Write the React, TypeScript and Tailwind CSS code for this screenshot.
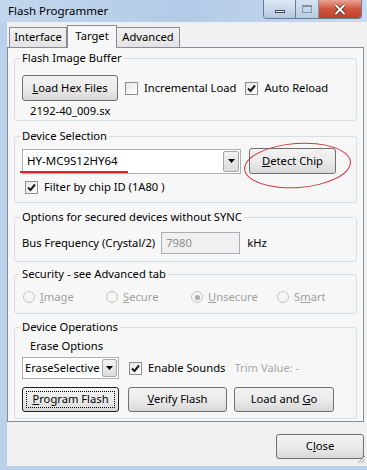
import React from "react";

const font = "font-['Segoe_UI','Noto_Sans',sans-serif]";

const Btn: React.FC<{ children: React.ReactNode; className?: string; focused?: boolean }> = ({
  children,
  className = "",
  focused = false,
}) => (
  <div
    className={`relative flex items-center justify-center rounded-[3px] border ${
      focused ? "border-[#1f1f1f]" : "border-[#707070]"
    } bg-gradient-to-b from-[#f2f2f2] via-[#ebebeb] to-[#d8d8d8] text-black ${className}`}
  >
    {children}
    {focused && <div className="absolute inset-[3px] border border-dotted border-black" />}
  </div>
);

const Check: React.FC<{ checked?: boolean }> = ({ checked }) => (
  <div className="flex h-[13px] w-[13px] shrink-0 items-center justify-center border border-[#8e8f8f] bg-gradient-to-br from-[#e6e6e6] to-white">
    {checked && (
      <svg width="9" height="9" viewBox="0 0 9 9">
        <path d="M1 4.5 L3.5 7 L8 1.5" fill="none" stroke="#1c1c1c" strokeWidth="2" />
      </svg>
    )}
  </div>
);

const Radio: React.FC<{ checked?: boolean }> = ({ checked }) => (
  <div className="flex h-[12px] w-[12px] items-center justify-center rounded-full border border-[#c3c3c3] bg-[#f4f4f4]">
    {checked && <div className="h-[5px] w-[5px] rounded-full bg-[#a8a8a8]" />}
  </div>
);

const Group: React.FC<{ title: string; children: React.ReactNode; className?: string }> = ({
  title,
  children,
  className = "",
}) => (
  <div className={`relative mx-[6px] rounded-[3px] border border-[#d5dfe5] ${className}`}>
    <span className="absolute -top-[9px] left-[5px] bg-[#f7f7f7] px-[2px] leading-[16px] text-black">
      {title}
    </span>
    {children}
  </div>
);

const Arrow = () => (
  <svg width="7" height="4" viewBox="0 0 7 4">
    <path d="M0 0 H7 L3.5 4 Z" fill="#000" />
  </svg>
);

export default function App() {
  return (
    <div className={`${font} h-[470px] w-[367px] overflow-hidden bg-[#b9d1ea] text-[11.2px]`}>
      {/* title bar */}
      <div className="flex h-[22px] items-start justify-between bg-gradient-to-r from-[#c3d7ee] via-[#b3cbe6] to-[#c9dbef]">
        <span className="pl-[8px] pt-[3px] text-[11.5px] leading-[16px] text-black">Flash Programmer</span>
        <div className="mr-[5px] flex h-[19px] overflow-hidden rounded-b-[4px] border border-t-0 border-[#6b7d95]">
          <div className="flex w-[32px] items-center justify-center border-r border-[#6b7d95] bg-gradient-to-b from-[#dfe9f5] to-[#b5c8e0]">
            <div className="mt-[5px] h-[3px] w-[10px] border border-[#3b4a5e] bg-white" />
          </div>
          <div className="flex w-[23px] items-center justify-center border-r border-[#6b7d95] bg-gradient-to-b from-[#dfe9f5] to-[#b5c8e0] opacity-70">
            <div className="h-[8px] w-[10px] border border-t-2 border-[#6a7a90]" />
          </div>
          <div className="flex w-[42px] items-center justify-center bg-gradient-to-b from-[#e8a493] via-[#d0553f] to-[#c2402b]">
            <svg width="12" height="11" viewBox="0 0 12 11">
              <path d="M1.5 1 L10.5 10 M10.5 1 L1.5 10" stroke="#3a1a14" strokeWidth="3.4" />
              <path d="M1.5 1 L10.5 10 M10.5 1 L1.5 10" stroke="#fff" strokeWidth="2" />
            </svg>
          </div>
        </div>
      </div>

      {/* client */}
      <div className="ml-[7px] flex h-[444px] flex-col bg-[#f0f0f0] text-black">
        {/* tabs */}
        <div className="flex h-[25px] items-end pl-[2px] pt-[2px]">
          <div className="flex h-[20px] w-[58px] items-center justify-center border border-b-0 border-[#898c95] bg-gradient-to-b from-[#f2f2f2] to-[#e3e3e3]">
            Interface
          </div>
          <div className="relative z-10 -mb-[1px] flex h-[23px] w-[50px] items-center justify-center border border-b-0 border-[#898c95] bg-[#f7f7f7] pb-[2px]">
            Target
          </div>
          <div className="flex h-[20px] w-[63px] items-center justify-center border border-b-0 border-l-0 border-[#898c95] bg-gradient-to-b from-[#f2f2f2] to-[#e3e3e3]">
            Advanced
          </div>
        </div>

        {/* tab panel */}
        <div className="mr-[3px] flex h-[375px] flex-col border border-[#898c95] bg-[#f7f7f7] pt-[10px]">
          <Group title="Flash Image Buffer" className="h-[63px]">
            <div className="flex items-center pl-[7px] pt-[16px]">
              <Btn className="h-[26px] w-[96px]">
                <span>
                  <u>L</u>oad Hex Files
                </span>
              </Btn>
              <div className="ml-[7px]">
                <Check />
              </div>
              <span className="ml-[6px]">Incremental Load</span>
              <div className="ml-[9px]">
                <Check checked />
              </div>
              <span className="ml-[6px]">Auto Reload</span>
            </div>
            <div className="pl-[15px] pt-[2px] leading-[15px]">2192-40_009.sx</div>
          </Group>

          <Group title="Device Selection" className="mt-[15px] h-[67px]">
            <div className="flex items-center pl-[7px] pt-[11px]">
              <div className="relative flex h-[25px] w-[219px] items-center border border-[#abadb3] bg-white">
                <span className="pl-[4px] text-[11.5px]">HY-MC9S12HY64</span>
                <div className="absolute left-[-3px] top-[21px] h-[2px] w-[108px] bg-[#e0202a]" />
                <div className="absolute right-[1px] top-[1px] flex h-[21px] w-[16px] items-center justify-center rounded-[2px] border border-[#a7a7a7] bg-gradient-to-b from-[#f2f2f2] to-[#dcdcdc]">
                  <Arrow />
                </div>
              </div>
              <div className="relative ml-[8px]">
                <Btn className="h-[26px] w-[87px]">
                  <span>
                    <u>D</u>etect Chip
                  </span>
                </Btn>
                <div className="absolute -left-[5px] -top-[5px] h-[45px] w-[107px] -rotate-[4deg] rounded-[50%] border-[1.5px] border-[#d8323c]" />
              </div>
            </div>
            <div className="flex items-center gap-[6px] pl-[10px] pt-[5px] leading-[16px]">
              <Check checked />
              <span>Filter by chip ID (1A80 )</span>
            </div>
          </Group>

          <Group title="Options for secured devices without SYNC" className="mt-[14px] h-[45px]">
            <div className="flex items-center pl-[7px] pt-[14px]">
              <span>Bus Frequency (Crystal/2)</span>
              <div className="ml-[6px] flex h-[22px] w-[79px] items-center border border-[#abadb3] bg-[#f0f0f0] pl-[4px] text-[#8d8d8d]">
                7980
              </div>
              <span className="ml-[7px]">kHz</span>
            </div>
          </Group>

          <Group title="Security - see Advanced tab" className="mt-[12px] h-[40px]">
            <div className="flex items-center pl-[8px] pt-[14px] text-[#a0a0a0]">
              <div className="flex w-[83px] items-center gap-[5px]">
                <Radio />
                <span>
                  <u>I</u>mage
                </span>
              </div>
              <div className="flex w-[85px] items-center gap-[5px]">
                <Radio />
                <span>
                  <u>S</u>ecure
                </span>
              </div>
              <div className="flex w-[86px] items-center gap-[5px]">
                <Radio checked />
                <span>
                  <u>U</u>nsecure
                </span>
              </div>
              <div className="flex items-center gap-[5px]">
                <Radio />
                <span>
                  S<u>m</u>art
                </span>
              </div>
            </div>
          </Group>

          <Group title="Device Operations" className="mt-[13px] h-[92px]">
            <div className="pl-[15px] pt-[10px] leading-[16px]">Erase Options</div>
            <div className="flex items-center pl-[7px] pt-[3px]">
              <div className="relative flex h-[22px] w-[97px] items-center border border-[#abadb3] bg-white">
                <span className="pl-[2px]">EraseSelective</span>
                <div className="absolute right-[1px] top-[1px] flex h-[18px] w-[15px] items-center justify-center rounded-[2px] border border-[#a7a7a7] bg-gradient-to-b from-[#f2f2f2] to-[#dcdcdc]">
                  <Arrow />
                </div>
              </div>
              <div className="ml-[10px]">
                <Check checked />
              </div>
              <span className="ml-[6px]">Enable Sounds</span>
              <span className="ml-[9px] text-[#a8a8a8]">Trim Value: -</span>
            </div>
            <div className="flex items-center pl-[7px] pt-[8px]">
              <Btn focused className="h-[25px] w-[97px]">
                <span>
                  <u>P</u>rogram Flash
                </span>
              </Btn>
              <Btn className="ml-[9px] h-[25px] w-[99px]">
                <span>
                  <u>V</u>erify Flash
                </span>
              </Btn>
              <Btn className="ml-[7px] h-[25px] w-[100px]">
                <span>
                  Load and <u>G</u>o
                </span>
              </Btn>
            </div>
          </Group>
        </div>

        {/* bottom */}
        <div className="relative flex flex-1 items-start justify-end pr-[3px] pt-[12px]">
          <Btn className="h-[25px] w-[88px]">
            <span>
              C<u>l</u>ose
            </span>
          </Btn>
          <svg className="absolute bottom-[2px] right-[1px]" width="10" height="10" viewBox="0 0 10 10">
            <path d="M9 2 L2 9 M9 5 L5 9 M9 8 L8 9" stroke="#a0a0a0" strokeWidth="1" />
          </svg>
        </div>
      </div>
    </div>
  );
}
